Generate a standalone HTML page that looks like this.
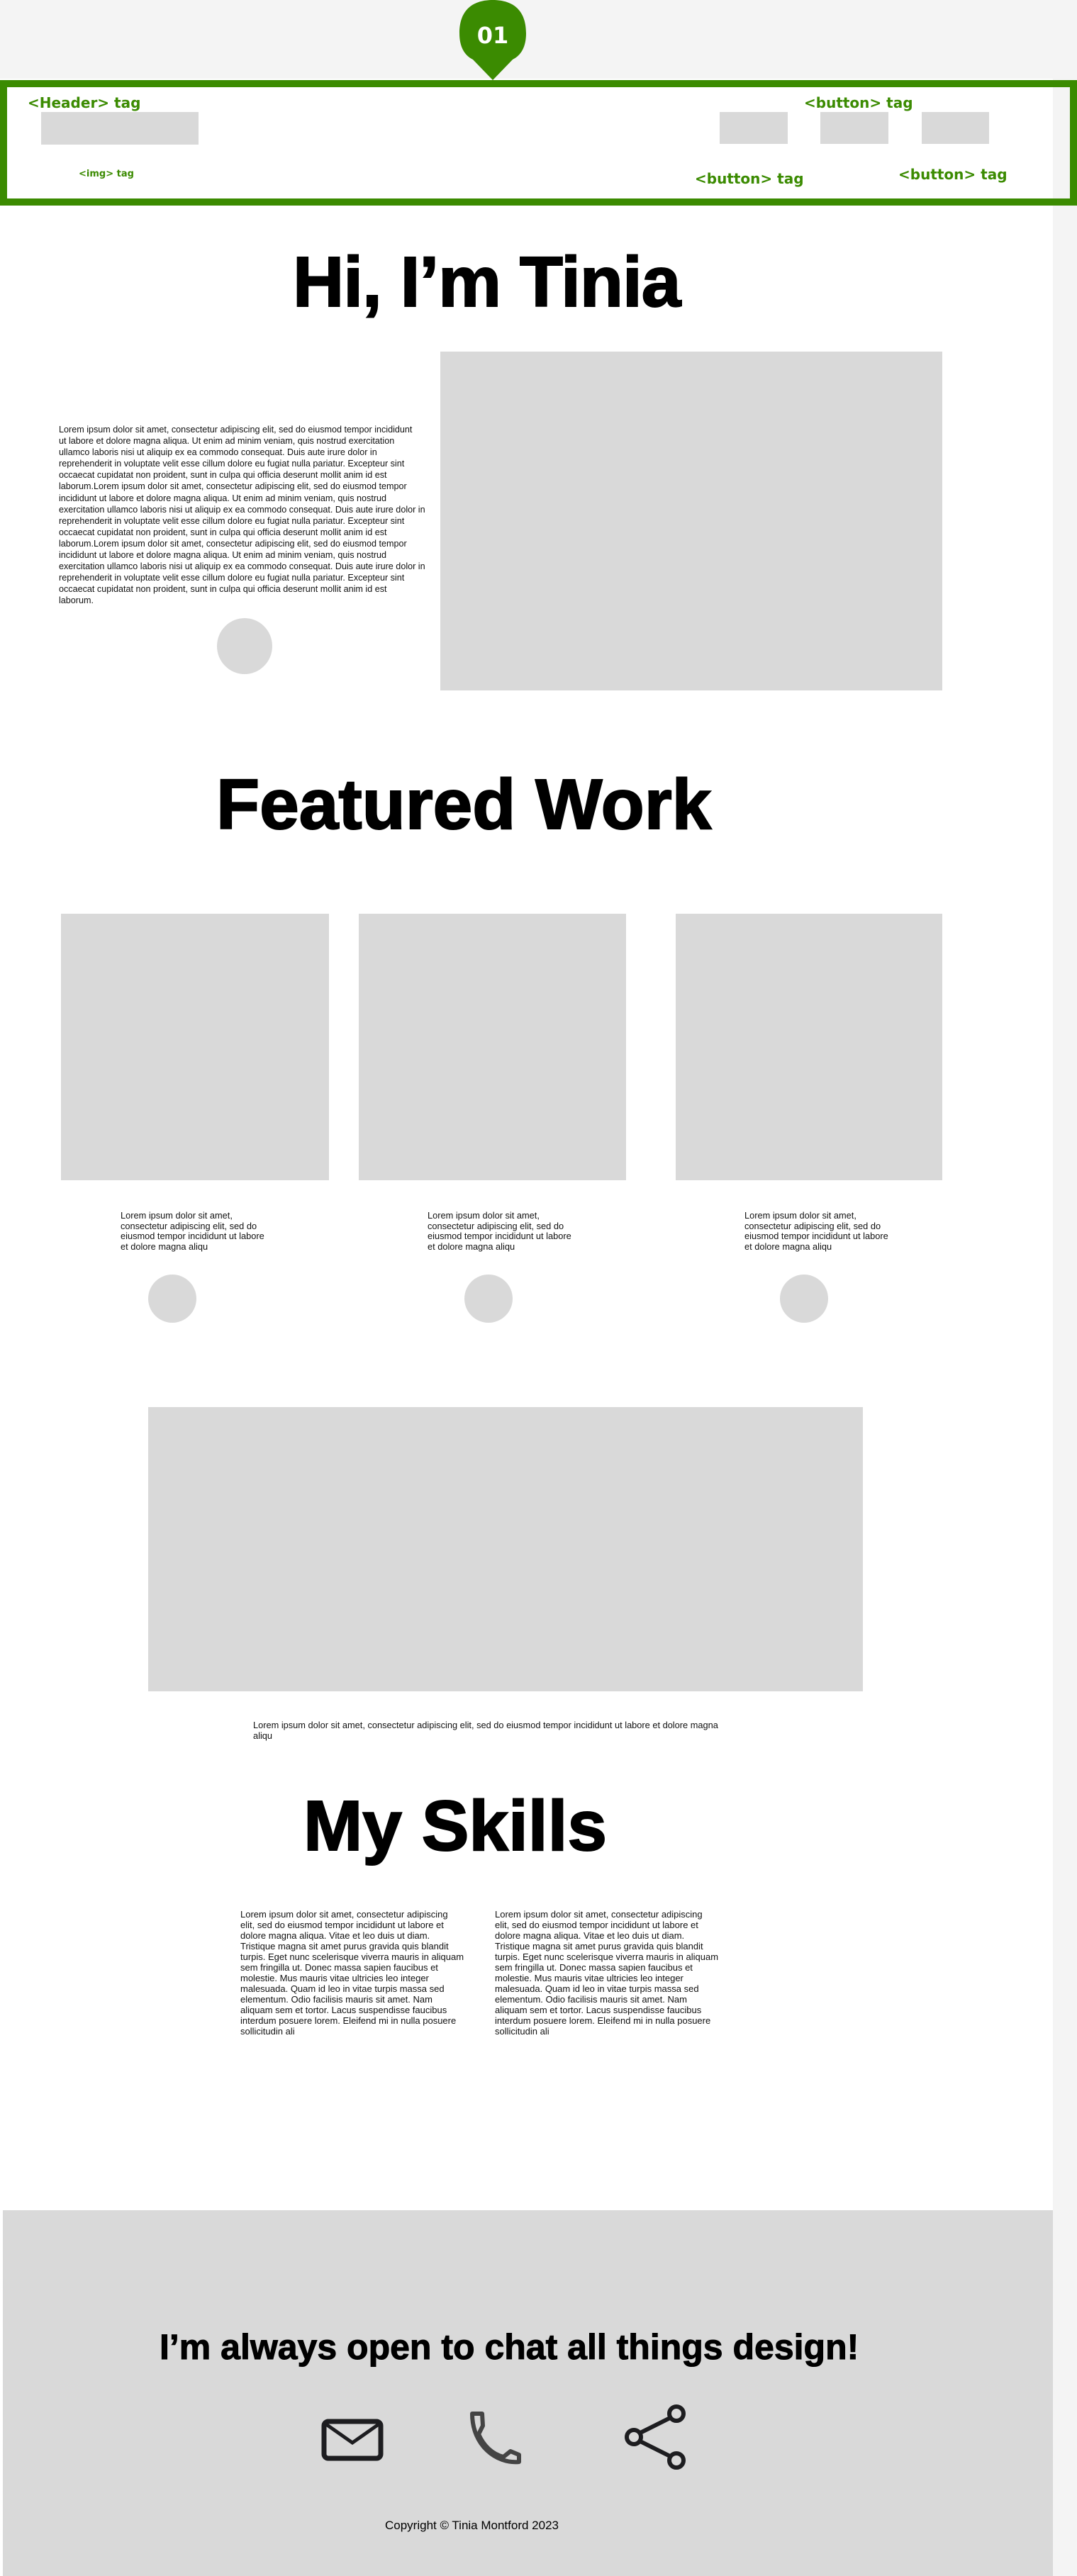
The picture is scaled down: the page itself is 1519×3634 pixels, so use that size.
<!DOCTYPE html>
<html><head><meta charset="utf-8">
<style>
*{margin:0;padding:0;box-sizing:border-box}
html,body{width:1519px;height:3634px;overflow:hidden}
body{position:relative;background:#f4f4f4;font-family:"Liberation Sans",Arial,sans-serif;color:#000}
.abs{position:absolute}
.page{position:absolute;left:0;top:111px;width:1485px;height:3523px;background:#fff}
.g{background:#d9d9d9}
.lbl{position:absolute;font-family:"DejaVu Sans",sans-serif;font-weight:bold;color:#3b8b01;white-space:nowrap}
.h{position:absolute;font-weight:bold;font-size:100px;line-height:115px;white-space:nowrap;-webkit-text-stroke:2px #000}
.p{position:absolute;white-space:nowrap;color:#111}
.circ{position:absolute;border-radius:50%;background:#d9d9d9}
</style></head><body>
<div class="page"></div>

<svg class="abs" style="left:647px;top:0" width="96" height="116" viewBox="0 0 96 116">
<path d="M48 0 C22 0 1 12 1 47 C1 66 8 78 20 84 L48 113 L76 84 C88 78 95 66 95 47 C95 12 74 0 48 0Z" fill="#3b8b01"/>
<text x="48" y="61" text-anchor="middle" font-family="DejaVu Sans,sans-serif" font-weight="bold" font-size="32" fill="#fff">01</text>
</svg>

<div class="abs" style="left:0;top:113px;width:1519px;height:177px;border:10px solid #3b8b01;background:transparent"></div>
<div class="abs g" style="left:58px;top:158px;width:222px;height:46px"></div>
<div class="abs g" style="left:1015px;top:158px;width:96px;height:45px"></div>
<div class="abs g" style="left:1157px;top:158px;width:96px;height:45px"></div>
<div class="abs g" style="left:1300px;top:158px;width:95px;height:45px"></div>
<div class="lbl" style="left:39px;top:133px;font-size:20px">&lt;Header&gt; tag</div>
<div class="lbl" style="left:1134px;top:133px;font-size:20px">&lt;button&gt; tag</div>
<div class="lbl" style="left:111px;top:238px;font-size:13px">&lt;img&gt; tag</div>
<div class="lbl" style="left:980px;top:240px;font-size:20px">&lt;button&gt; tag</div>
<div class="lbl" style="left:1267px;top:234px;font-size:20px">&lt;button&gt; tag</div>

<div class="h" style="left:413px;top:341px;letter-spacing:-1px">Hi, I’m Tinia</div>
<div class="abs g" style="left:621px;top:496px;width:708px;height:478px"></div>
<div class="p" style="left:83px;top:598px;font-size:12.6px;line-height:16.1px">Lorem ipsum dolor sit amet, consectetur adipiscing elit, sed do eiusmod tempor incididunt<br>ut labore et dolore magna aliqua. Ut enim ad minim veniam, quis nostrud exercitation<br>ullamco laboris nisi ut aliquip ex ea commodo consequat. Duis aute irure dolor in<br>reprehenderit in voluptate velit esse cillum dolore eu fugiat nulla pariatur. Excepteur sint<br>occaecat cupidatat non proident, sunt in culpa qui officia deserunt mollit anim id est<br>laborum.Lorem ipsum dolor sit amet, consectetur adipiscing elit, sed do eiusmod tempor<br>incididunt ut labore et dolore magna aliqua. Ut enim ad minim veniam, quis nostrud<br>exercitation ullamco laboris nisi ut aliquip ex ea commodo consequat. Duis aute irure dolor in<br>reprehenderit in voluptate velit esse cillum dolore eu fugiat nulla pariatur. Excepteur sint<br>occaecat cupidatat non proident, sunt in culpa qui officia deserunt mollit anim id est<br>laborum.Lorem ipsum dolor sit amet, consectetur adipiscing elit, sed do eiusmod tempor<br>incididunt ut labore et dolore magna aliqua. Ut enim ad minim veniam, quis nostrud<br>exercitation ullamco laboris nisi ut aliquip ex ea commodo consequat. Duis aute irure dolor in<br>reprehenderit in voluptate velit esse cillum dolore eu fugiat nulla pariatur. Excepteur sint<br>occaecat cupidatat non proident, sunt in culpa qui officia deserunt mollit anim id est<br>laborum.</div>
<div class="circ" style="left:306px;top:872px;width:78px;height:79px"></div>

<div class="h" style="left:305px;top:1078px">Featured Work</div>
<div class="abs g" style="left:86px;top:1289px;width:378px;height:376px"></div>
<div class="abs g" style="left:506px;top:1289px;width:377px;height:376px"></div>
<div class="abs g" style="left:953px;top:1289px;width:376px;height:376px"></div>
<div class="p" style="left:170px;top:1708px;font-size:12.8px;line-height:14.6px">Lorem ipsum dolor sit amet,<br>consectetur adipiscing elit, sed do<br>eiusmod tempor incididunt ut labore<br>et dolore magna aliqu</div>
<div class="p" style="left:603px;top:1708px;font-size:12.8px;line-height:14.6px">Lorem ipsum dolor sit amet,<br>consectetur adipiscing elit, sed do<br>eiusmod tempor incididunt ut labore<br>et dolore magna aliqu</div>
<div class="p" style="left:1050px;top:1708px;font-size:12.8px;line-height:14.6px">Lorem ipsum dolor sit amet,<br>consectetur adipiscing elit, sed do<br>eiusmod tempor incididunt ut labore<br>et dolore magna aliqu</div>
<div class="circ" style="left:209px;top:1798px;width:68px;height:68px"></div>
<div class="circ" style="left:655px;top:1798px;width:68px;height:68px"></div>
<div class="circ" style="left:1100px;top:1798px;width:68px;height:68px"></div>

<div class="abs g" style="left:209px;top:1985px;width:1008px;height:401px"></div>
<div class="p" style="left:357px;top:2426px;font-size:12.8px;line-height:15px">Lorem ipsum dolor sit amet, consectetur adipiscing elit, sed do eiusmod tempor incididunt ut labore et dolore magna<br>aliqu</div>

<div class="h" style="left:428px;top:2519px">My Skills</div>
<div class="p" style="left:339px;top:2693px;font-size:13px;line-height:15px">Lorem ipsum dolor sit amet, consectetur adipiscing<br>elit, sed do eiusmod tempor incididunt ut labore et<br>dolore magna aliqua. Vitae et leo duis ut diam.<br>Tristique magna sit amet purus gravida quis blandit<br>turpis. Eget nunc scelerisque viverra mauris in aliquam<br>sem fringilla ut. Donec massa sapien faucibus et<br>molestie. Mus mauris vitae ultricies leo integer<br>malesuada. Quam id leo in vitae turpis massa sed<br>elementum. Odio facilisis mauris sit amet. Nam<br>aliquam sem et tortor. Lacus suspendisse faucibus<br>interdum posuere lorem. Eleifend mi in nulla posuere<br>sollicitudin ali</div>
<div class="p" style="left:698px;top:2693px;font-size:13px;line-height:15px">Lorem ipsum dolor sit amet, consectetur adipiscing<br>elit, sed do eiusmod tempor incididunt ut labore et<br>dolore magna aliqua. Vitae et leo duis ut diam.<br>Tristique magna sit amet purus gravida quis blandit<br>turpis. Eget nunc scelerisque viverra mauris in aliquam<br>sem fringilla ut. Donec massa sapien faucibus et<br>molestie. Mus mauris vitae ultricies leo integer<br>malesuada. Quam id leo in vitae turpis massa sed<br>elementum. Odio facilisis mauris sit amet. Nam<br>aliquam sem et tortor. Lacus suspendisse faucibus<br>interdum posuere lorem. Eleifend mi in nulla posuere<br>sollicitudin ali</div>

<div class="abs g" style="left:4px;top:3118px;width:1481px;height:516px"></div>
<div class="abs" style="left:225px;top:3283px;font-weight:bold;font-size:50px;line-height:56px;white-space:nowrap;-webkit-text-stroke:1px #000">I’m always open to chat all things design!</div>

<svg class="abs" style="left:450px;top:3410px" width="94" height="64" viewBox="0 0 94 64">
<rect x="7" y="6" width="80" height="52" rx="6" fill="none" stroke="#1d1d20" stroke-width="7"/>
<path d="M10 10 L47 36 L84 10" fill="none" stroke="#1d1d20" stroke-width="5"/>
</svg>
<svg class="abs" style="left:660px;top:3400px" width="78" height="78" viewBox="0 0 78 78">
<path d="M6 5 L20 5 L21 22 L15 34 C22 50 34 62 50 66 L60 58 L72 63 L72 73 C40 76 6 50 6 5Z" fill="none" stroke="#444" stroke-width="6" stroke-linejoin="round"/>
</svg>
<svg class="abs" style="left:875px;top:3388px" width="95" height="102" viewBox="0 0 95 102">
<circle cx="79" cy="17" r="10" fill="none" stroke="#1d1d20" stroke-width="6"/>
<circle cx="19" cy="50" r="10" fill="none" stroke="#1d1d20" stroke-width="6"/>
<circle cx="79" cy="83" r="10" fill="none" stroke="#1d1d20" stroke-width="6"/>
<path d="M28 44 L70 23 M28 56 L70 77" stroke="#1d1d20" stroke-width="6"/>
</svg>
<div class="abs" style="left:543px;top:3552px;font-size:17px;line-height:22px;white-space:nowrap;color:#000">Copyright © Tinia Montford 2023</div>
</body></html>
